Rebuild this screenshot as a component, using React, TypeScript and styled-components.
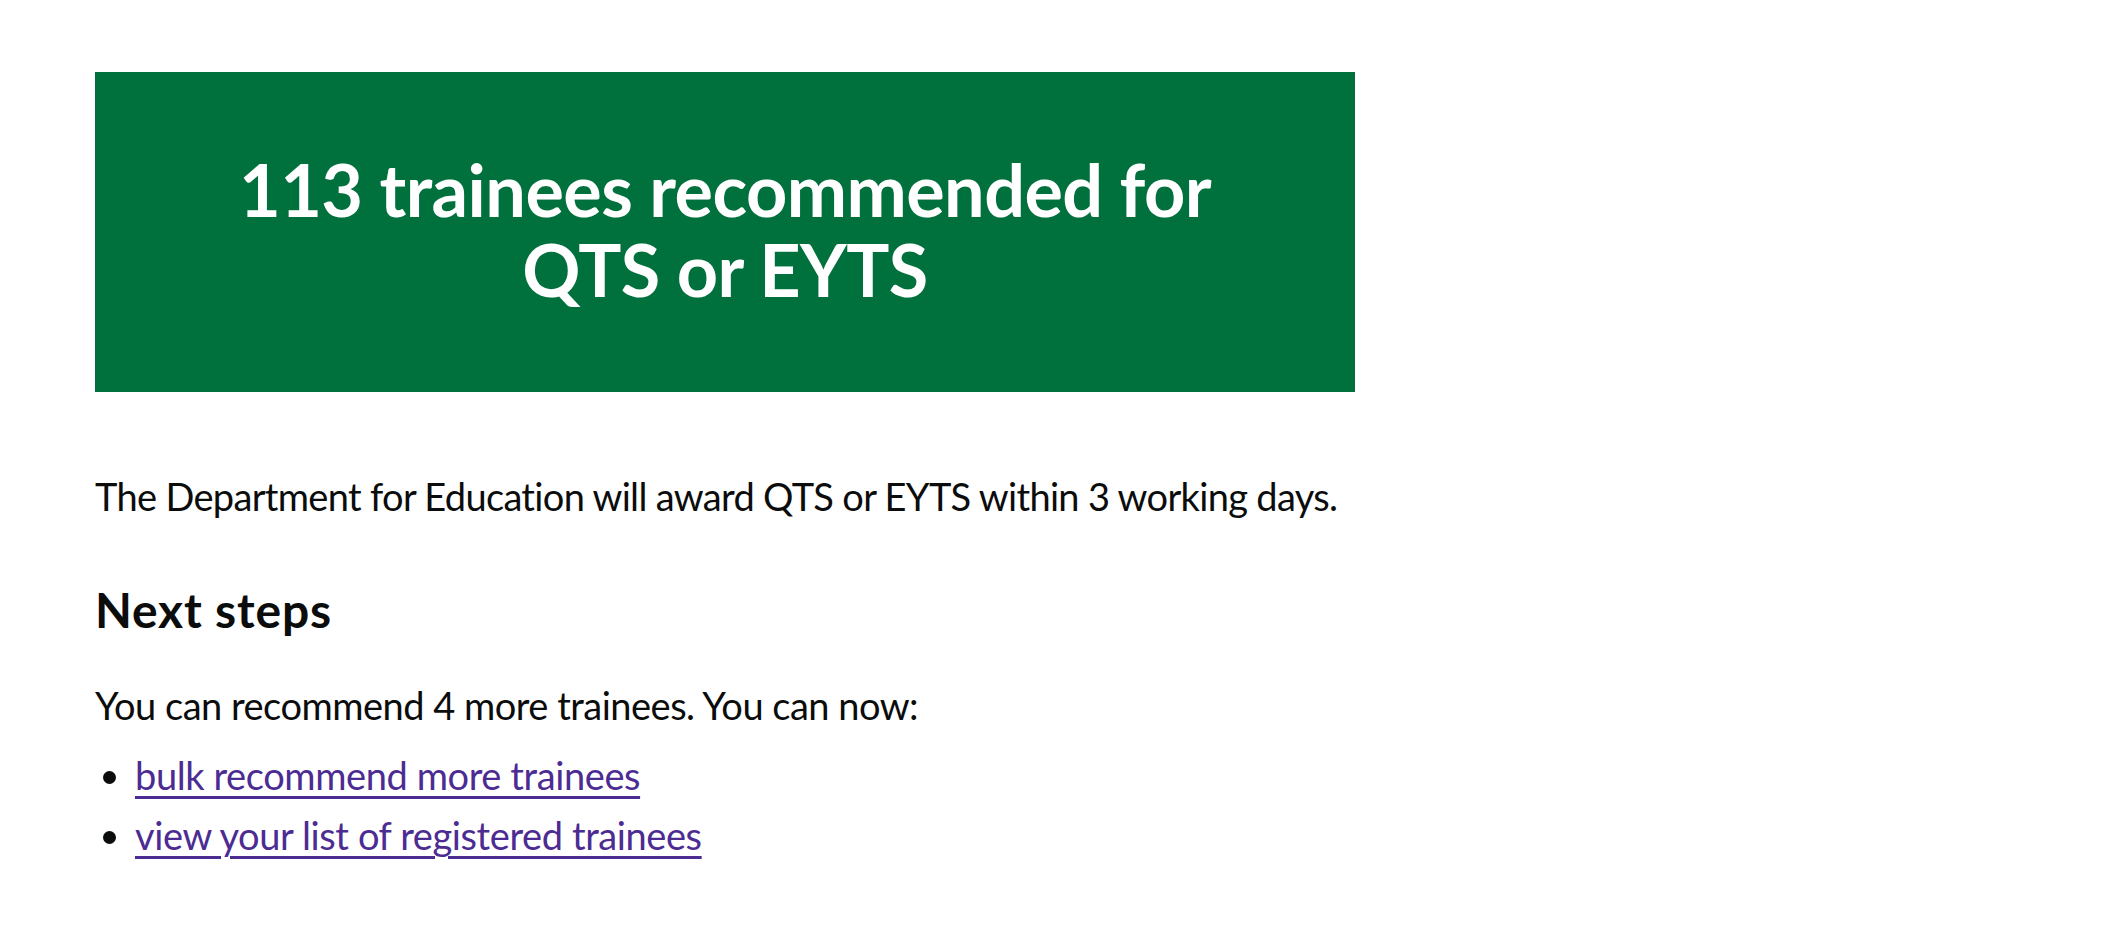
import React from "react";
import styled, { createGlobalStyle } from "styled-components";

const GlobalStyle = createGlobalStyle`
  html, body {
    margin: 0;
    padding: 0;
    background: #ffffff;
  }
  body {
    font-family: Lato, "Liberation Sans", Arial, sans-serif;
    color: #0b0c0c;
    -webkit-font-smoothing: antialiased;
  }
`;

const Page = styled.main`
  padding: 72px 0 60px 95px;
`;

const Column = styled.div`
  width: 1260px;
`;

const Panel = styled.div`
  box-sizing: border-box;
  background: #00703c;
  color: #ffffff;
  border: 10px solid transparent;
  padding: 67px 70px 73px;
  text-align: center;
  margin-bottom: 79px;
`;

const PanelTitle = styled.h1`
  margin: 0;
  font-family: Lato, "Liberation Sans", Arial, sans-serif;
  font-weight: 700;
  font-size: 72px;
  line-height: 80px;
  letter-spacing: -0.55px;
`;

const Body = styled.p<{ $mb: number; $tight?: boolean }>`
  margin: 0 0 ${(p) => p.$mb}px;
  font-size: 38px;
  line-height: 50px;
  font-weight: 400;
  letter-spacing: ${(p) => (p.$tight ? "-0.67px" : "-0.5px")};
  white-space: nowrap;
`;

const Heading = styled.h2`
  margin: 0 0 40px;
  font-size: 48px;
  line-height: 60px;
  font-weight: 700;
  letter-spacing: 0.8px;
`;

const BulletList = styled.ul`
  margin: 0;
  padding-left: 40px;
  list-style-type: disc;
`;

const Item = styled.li`
  margin-bottom: 10px;
  font-size: 38px;
  line-height: 50px;
  letter-spacing: -0.4px;
`;

const Link = styled.a`
  color: #4c2c92;
  text-decoration: underline;
  text-decoration-thickness: 3px;
  text-underline-offset: 6px;
`;

export default function App() {
  return (
    <>
      <GlobalStyle />
      <Page>
        <Column>
          <Panel>
            <PanelTitle>113 trainees recommended for QTS or EYTS</PanelTitle>
          </Panel>
          <Body $mb={59} $tight>
            The Department for Education will award QTS or EYTS within 3 working days.
          </Body>
          <Heading>Next steps</Heading>
          <Body $mb={20}>You can recommend 4 more trainees. You can now:</Body>
          <BulletList>
            <Item>
              <Link href="#">bulk recommend more trainees</Link>
            </Item>
            <Item>
              <Link href="#">view your list of registered trainees</Link>
            </Item>
          </BulletList>
        </Column>
      </Page>
    </>
  );
}
